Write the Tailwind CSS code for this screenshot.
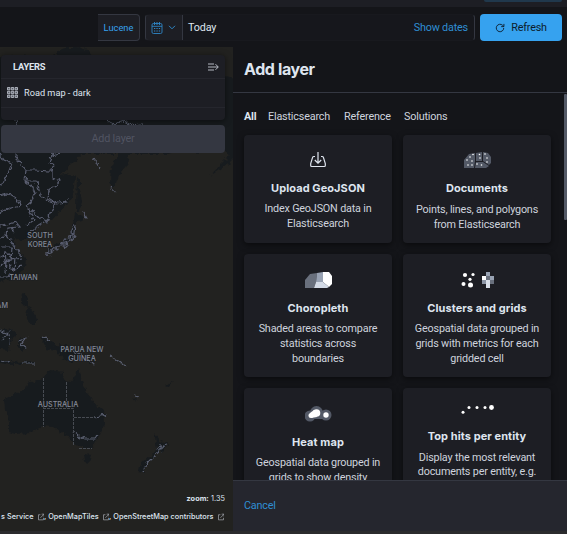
<!DOCTYPE html>
<html lang="en">
<head>
<meta charset="utf-8">
<title>Maps</title>
<script src="https://cdn.jsdelivr.net/npm/@tailwindcss/browser@4"></script>
</head>
<body class="w-[567px] h-[534px] overflow-hidden bg-[#141519] font-['Roboto','Inter',sans-serif] text-[10.800px] tracking-[-0.180px] text-[#dfe5ef]">
<div class="flex flex-col h-[534px]">
  <div class="h-[7px] shrink-0 bg-[#1d1e24] flex justify-end pr-[5px] shadow-[0_1px_3px_#0008]">
    <div class="w-[78px] h-[2px] bg-[#20384c] rounded-b-[3px]"></div>
  </div>
  <header class="h-10 shrink-0 flex pt-[7px] pl-[98px] pr-[5px] bg-[#141519]">
    <button class="w-[42px] h-[27px] pt-px bg-[#1d1e24] border border-l-0 border-[#343741] rounded-r-[4px] text-[#36a2ef] text-[9.300px] tracking-normal">Lucene</button>
    <div class="ml-[5px] w-[330px] h-[27px] flex items-center border border-y-[#18191e] border-r-[#343741] border-l-[#343741] rounded-[4px] overflow-hidden bg-[#16171c]">
      <div class="w-9 h-full bg-[#1d1e24] flex items-center pl-[5px] gap-[5px] text-[#2f86c6] shadow-[0_0_0_1px_#343741]">
        <svg width="12" height="12" viewBox="0 0 12 12" fill="none" stroke="currentColor" stroke-width=".9"><rect x="1" y="1.500" width="10" height="10" rx="1.400"/><path d="M1 4.300h10M3.500 0v3M6 0v3M8.500 0v3"/><path d="M3 6.500h1.300M5.400 6.500h1.300M7.800 6.500h1.300M3 9h1.300M5.400 9h1.300M7.800 9h1.300" stroke-width="1.200"/></svg>
        <svg width="8" height="5" viewBox="0 0 8 5" fill="none" stroke="currentColor"><path d="M1 .8 4 3.800 7 .8"/></svg>
      </div>
      <span class="pl-[6px] pt-px">Today</span>
      <span class="ml-auto pr-[6px] pt-px text-[#2f8ed3]">Show dates</span>
    </div>
    <button class="ml-[5px] w-[82px] h-[27px] bg-[#36a2ef] text-[#0c1c2b] rounded-[4px] flex items-center justify-center gap-[6px]">
      <svg width="10" height="10" viewBox="0 0 11 11" fill="none" stroke="currentColor"><path d="M9.600 5.500A4.100 4.100 0 1 1 8.300 2.500L9.700 3.900M9.800 1v3H6.800"/></svg><span class="pt-px">Refresh</span>
    </button>
  </header>
  <main class="h-[484px] shrink-0 flex">
    <section class="relative w-[233px] shrink-0 bg-[#222220] overflow-hidden">
      <svg class="absolute inset-0" width="233" height="484" viewBox="0 47 233 484">
        <defs><filter id="coast" x="-10" y="47" width="250" height="484" filterUnits="userSpaceOnUse" color-interpolation-filters="sRGB"><feTurbulence type="fractalNoise" baseFrequency=".22" numOctaves="2" seed="4"/><feDisplacementMap in="SourceGraphic" scale="6" xChannelSelector="R" yChannelSelector="G"/></filter></defs>
        <g filter="url(#coast)">
        <g fill="#171b1e">
          <path d="M-5 58 20 55 48 58 66 47H76L88 50 93 58H170L224 76 240 79V152L228 164 210 176 222 163 230 155 224 150 202 153 178 151 168 154H129L127 166 119 175 114 190 110 183 111 167 120 154H81L70 166 59 175 66 174 75 176 73 195 68 204 60 211 52 220 44 224 34 229 27 233 27 238 20 241 16 238 14 235 16 248 26 258 25 266 18 275 8 280 -5 283Z"/>
          <path d="M28 225 34 228 33 237 28 239 25 231ZM77 176 80 179 80 190 82 202 79 211 76 210ZM75 213 86 218 83 221 76 222 75 228 73 238 67 244 55 248 48 255 46 251 55 245 69 237 72 230ZM22 293 28 298 28 307 34 311 37 320 33 326 28 320 26 315 28 308 21 303ZM-5 331 12 328 15 334 11 344 8 350 -5 348ZM19 339 26 337 21 342 25 349 22 352 18 345ZM40 336 48 341 56 345 66 346 76 350 86 356 96 364 91 364 80 356 74 363 64 359 55 351 47 349ZM0 359 15 362 33 361 33 363 11 365 0 363Z"/>
          <path d="M43 378 50 370 64 372 63 379 70 383 74 380 75 371 79 369 82 381 87 393 96 404 104 411 105 423 98 438 91 449 79 447 73 443 68 436 61 432 53 427 42 426 30 433 15 434 9 432 9 422 5 409 4 399 11 396 25 389 28 383ZM83 454 92 455 90 461 87 464 84 460Z"/>
          <path d="M154 433 160 440 168 444 163 451 158 453 145 466 145 473 138 472 139 466 151 455 157 449ZM135 398 138 401 133 398ZM166 386 173 381 168 387ZM110 356 117 361 126 367Z"/>
        </g>
        <path d="M15 154 19 162 26 170 35 170 51 171 53 164 49 162 52 154M26 170 25 181 32 186 35 193 31 203 27 206M0 154 4 160 12 163 9 171 5 181 -3 187M25 181 37 181 40 195 48 200 55 203M52 170 52 178 59 181 55 187 49 190 48 198 57 203 67 202 67 200 63 202M55 203 50 213 48 221 38 217 28 208M48 221 42 224 31 230M-3 196 8 194 15 198 20 205 12 207 0 213M27 206 34 220 27 225M0 226 7 225 16 222 20 227 7 228 6 236 0 239M9 228 13 231 12 227M5 235 10 240 15 247 22 256M0 247 12 247 11 260 22 258M0 257 7 253 14 259M0 266 9 260 10 267 17 270M5 251 6 262 5 273M16 258 15 270 22 266M0 277 8 277 10 273M100 168 94 158M72 225 71 233 75 235 69 237 72 240 65 243 68 245 55 247 58 249 48 253 48 247M75 225 73 240 61 244M70 237 62 242 66 247M54 246 51 251 45 252 49 257M84 213 86 219M111 188 115 193" fill="none" stroke="#5a5e70" stroke-width="1.200"/>
        <path d="M15 115 18 130 16 155M60 153 52 155M104 119 113 124 124 121 134 126 142 125M-2 330 9 334 10 344M2 340 12 329M19 341 26 338 21 345 26 349M1 360 9 362M22 363 34 363M88 359 95 366M43 337 52 342M72 351 83 355M160 443 160 451 153 457 145 465 143 472M157 448 167 445M158 450 164 448M143 466 146 467M134 396 138 397M110 356 117 360 126 367M73 432 78 436 84 439 94 439 97 435M94 417 101 416 105 414" fill="none" stroke="#5b6071" stroke-width="1.100"/>
        </g>
        <path d="M43.500 378V427M66.500 382V408M43 408.500H73.500V446M74 417.500H95M79 448.500H92" fill="none" stroke="#474b52" stroke-dasharray="3 1"/>
        <g class="font-['Inter',sans-serif] tracking-normal" fill="#858a98" font-size="7.200" font-weight="500" text-anchor="middle" stroke="#1b1e20" stroke-width="1" paint-order="stroke">
          <text x="40" y="238">SOUTH</text><text x="40" y="247">KOREA</text><text x="23.500" y="280">TAIWAN</text><text x="8" y="308" text-anchor="end">AM</text>
          <text x="82" y="352">PAPUA NEW</text><text x="82" y="361">GUINEA</text><text x="58" y="407">AUSTRALIA</text>
        </g>
      </svg>
      <div class="relative h-full flex flex-col pl-px pr-2 pt-2">
        <div class="h-[65px] shrink-0 rounded-[4px] bg-[#1d1e24] shadow-[0_1px_6px_#0008]">
          <div class="h-[24px] flex items-center justify-between pl-3 pr-[6px] border-b border-[#25262d] font-bold text-[9.300px]"><span class="pt-px">LAYERS</span>
            <svg width="11" height="8" viewBox="0 0 11 8" fill="none" stroke="#c5cad4" stroke-width=".9"><path d="M0 1H6M0 4H10M0 7H6M7.500 1.200 10.300 4 7.500 6.800"/></svg>
          </div>
          <div class="h-[29px] flex items-center pl-[6px] gap-[6px] border-b border-[#25262d] text-[9.200px] tracking-normal">
            <svg class="-translate-y-px" width="11" height="11" viewBox="0 0 11 11" fill="#5d616b" stroke="#c5cad4" stroke-width=".8"><path d="M.5 .5h2.400v2.400H.5zM4.300 .5h2.400v2.400H4.300zM8.100 .5h2.400v2.400H8.100zM.5 4.300h2.400v2.400H.5zM4.300 4.300h2.400v2.400H4.300zM8.100 4.300h2.400v2.400H8.100zM.5 8.100h2.400v2.400H.5zM4.300 8.100h2.400v2.400H4.300zM8.100 8.100h2.400v2.400H8.100z"/></svg>
            <span>Road map - dark</span>
          </div>
        </div>
        <button class="mt-[5px] h-7 pt-px shrink-0 rounded-[4px] bg-[#343741] text-[#515461]">Add layer</button>
        <div class="mt-auto text-right font-['Inter',sans-serif] tracking-[0.050px] text-[7.300px] leading-[10px]"><b>zoom:</b> 1.35</div>
        <div class="mt-2 mb-[9px] flex justify-end items-center font-['Inter',sans-serif] tracking-[0.020px] text-[7.300px] leading-[10px] font-medium whitespace-nowrap">
          <span>s Service</span><svg class="ml-1 w-[8px] h-[8px]" viewBox="0 0 8 8" fill="none" stroke="#b4b8c0" stroke-width=".8"><path d="M3 1.200H.6V7.500H6.800V5M4.500.5H7.500V3.500M7.400.6 3 5"/></svg>
          <span>,&nbsp;OpenMapTiles</span><svg class="ml-1 w-[8px] h-[8px]" viewBox="0 0 8 8" fill="none" stroke="#b4b8c0" stroke-width=".8"><path d="M3 1.200H.6V7.500H6.800V5M4.500.5H7.500V3.500M7.400.6 3 5"/></svg>
          <span>,&nbsp;OpenStreetMap contributors</span><svg class="ml-1 mr-px w-[8px] h-[8px]" viewBox="0 0 8 8" fill="none" stroke="#b4b8c0" stroke-width=".8"><path d="M3 1.200H.6V7.500H6.800V5M4.500.5H7.500V3.500M7.400.6 3 5"/></svg>
        </div>
      </div>
    </section>
    <aside class="flex-1 min-w-0 flex flex-col bg-[#141519]">
      <div class="h-[46px] shrink-0 flex items-center pl-[11px] pb-px border-b border-[#343741] font-['Inter',sans-serif] text-[16px] tracking-[-0.400px] font-bold">Add layer</div>
      <div class="h-[387px] shrink-0 overflow-hidden flex">
        <div class="w-[331px] pl-[11px] pr-[13px] pt-[16px]">
          <nav class="flex h-[16px] items-center mb-[10px] text-[#ced3dd]"><b class="w-[24px] text-[#dfe5ef]">All</b><span class="w-[76px]">Elasticsearch</span><span class="w-[60px]">Reference</span><span>Solutions</span></nav>
          <div class="grid grid-cols-[148px_148px] gap-[11px] text-center leading-[15px] text-[#ced3dd]">
            <article class="h-[108px] rounded-[4px] bg-[#1d1e24] shadow-[0_2px_6px_#0008] pt-[17px]">
              <svg class="mx-auto" width="16" height="16" viewBox="0 0 16 16" fill="none" stroke="#dfe5ef" stroke-width="1.200"><path d="M5 4.500H3.800Q2.900 4.500 2.600 5.400L.7 11.500V13.500Q.7 14.500 1.700 14.500H14.300Q15.300 14.500 15.300 13.500V11.500L13.400 5.400Q13.100 4.500 12.200 4.500H11M8 0V11M4.800 8 8 11.200 11.200 8"/></svg>
              <h3 class="mt-[13px] font-['Inter',sans-serif] tracking-[0.070px] text-[11px] font-bold text-[#dfe5ef]">Upload GeoJSON</h3>
              <p class="mt-[5px]">Index GeoJSON data in<br>Elasticsearch</p>
            </article>
            <article class="h-[108px] rounded-[4px] bg-[#1d1e24] shadow-[0_2px_6px_#0008] pt-[17px]">
              <svg class="mx-auto" width="27" height="16" viewBox="0 0 27 16"><path d="M0 16V8L5 2 11 1V9L10 16ZM12 1 18 0V9H12ZM19 0 24 1 27 5V11L25 13 19 9ZM12 10H19L25 14 22 16H11Z" fill="#535966"/><g fill="#fff"><circle cx="9" cy="2.500" r=".8"/><circle cx="6" cy="5" r=".8"/><circle cx="3" cy="8" r=".8"/><circle cx="8" cy="9" r=".8"/><circle cx="4" cy="13" r=".8"/><circle cx="8" cy="13" r=".8"/><circle cx="15.500" cy="2.500" r=".8"/><circle cx="16" cy="6" r=".8"/><circle cx="21" cy="2" r=".8"/><circle cx="23" cy="6" r=".8"/><circle cx="23" cy="10" r=".8"/><circle cx="13" cy="12" r=".8"/><circle cx="17.500" cy="13" r=".8"/></g></svg>
              <h3 class="mt-[13px] font-['Inter',sans-serif] tracking-[0.070px] text-[11px] font-bold text-[#dfe5ef]">Documents</h3>
              <p class="mt-[6px]">Points, lines, and polygons<br>from Elasticsearch</p>
            </article>
            <article class="h-[123px] rounded-[4px] bg-[#1d1e24] shadow-[0_2px_6px_#0008] pt-[18px]">
              <svg class="mx-auto" width="27" height="16" viewBox="0 0 27 16"><path d="M0 16V8L5 2 12 1 11 10 9 16Z" fill="#69707d"/><path d="M12 1 18 0V10H11Z" fill="#98a2b3"/><path d="M18 0H24L27 4V12L24 15 18 10Z" fill="#fff"/><path d="M11 10H18L24 15 22 16H9Z" fill="#d3dae6"/></svg>
              <h3 class="mt-[13px] font-['Inter',sans-serif] tracking-[0.070px] text-[11px] font-bold text-[#dfe5ef]">Choropleth</h3>
              <p class="mt-[5px]">Shaded areas to compare<br>statistics across<br>boundaries</p>
            </article>
            <article class="h-[123px] rounded-[4px] bg-[#1d1e24] shadow-[0_2px_6px_#0008] pt-[18px]">
              <svg class="mx-auto" width="33" height="16" viewBox="0 0 33 16"><g fill="#fff"><circle cx="4" cy="3" r="2.100"/><circle cx="12" cy="2.500" r="1.600"/><circle cx="9" cy="7.300" r="1.600"/><circle cx="2.500" cy="12" r="2"/><circle cx="9.500" cy="13" r="2.500"/><path d="M21 4h4v4h-4z"/></g><path d="M25 0h4v4h-4zM29 4h4v4h-4z" fill="#98a2b3"/><path d="M25 4h4v4h-4zM29 8h4v4h-4z" fill="#69707d"/><path d="M21 8h4v4h-4z" fill="#8c95a5"/><path d="M25 8h4v8h-4z" fill="#d9dfe9"/></svg>
              <h3 class="mt-[13px] font-['Inter',sans-serif] tracking-[0.070px] text-[11px] font-bold text-[#dfe5ef]">Clusters and grids</h3>
              <p class="mt-[5px]">Geospatial data grouped in<br>grids with metrics for each<br>gridded cell</p>
            </article>
            <article class="h-[124px] rounded-[4px] bg-[#1d1e24] shadow-[0_2px_6px_#0008] pt-[18px]">
              <svg class="mx-auto" width="27" height="16" viewBox="0 0 27 16"><g fill="#535966"><circle cx="5" cy="10" r="5.500"/><circle cx="11.500" cy="6.500" r="6.500"/><circle cx="21" cy="9" r="5.500"/><path d="M7 7h12v6H7z"/></g><g fill="#fff"><circle cx="6" cy="9.500" r="2.500"/><circle cx="11.500" cy="7" r="3.800"/><circle cx="21" cy="9" r="2.700"/><path d="M5 7 9 4 12 11 6 12z"/></g></svg>
              <h3 class="mt-[13px] font-['Inter',sans-serif] tracking-[0.070px] text-[11px] font-bold text-[#dfe5ef]">Heat map</h3>
              <p class="mt-[5px]">Geospatial data grouped in<br>grids to show density</p>
            </article>
            <article class="h-[124px] rounded-[4px] bg-[#1d1e24] shadow-[0_2px_6px_#0008] pt-[16px]">
              <svg class="mx-auto" width="33" height="10" viewBox="0 0 33 10" fill="#fff"><circle cx="2" cy="8.300" r="1.500"/><circle cx="8" cy="3.500" r="1.500"/><circle cx="16" cy="3.500" r="1.500"/><circle cx="24" cy="3.500" r="1.500"/><circle cx="30.500" cy="3.500" r="2.400"/></svg>
              <h3 class="mt-[15px] font-['Inter',sans-serif] tracking-[0.070px] text-[11px] font-bold text-[#dfe5ef]">Top hits per entity</h3>
              <p class="mt-[7px] leading-[14px]">Display the most relevant<br>documents per entity, e.g.</p>
            </article>
          </div>
        </div>
        <div class="mt-px w-[3px] h-[126px] bg-[#535966] rounded-[1px]"></div>
      </div>
      <footer class="flex-1 flex items-center pl-[11px] border-t border-[#343741] bg-[#25262e] text-[#2f8ed3]">Cancel</footer>
    </aside>
  </main>
  <div class="flex-1 bg-[#2b2b2d]"></div>
</div>
</body>
</html>
